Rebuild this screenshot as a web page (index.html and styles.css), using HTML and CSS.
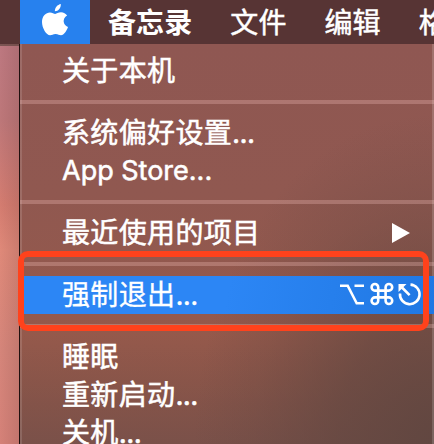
FILE: index.html
```
<!DOCTYPE html>
<html lang="zh-CN">
<head>
<meta charset="utf-8">
<title>Apple 菜单</title>
<link rel="stylesheet" href="styles.css">
</head>
<body>
<div class="desktop">
  <header class="menubar">
    <div class="apple">
      <svg width="26" height="32" viewBox="0 0 26 32" fill="#fff"><path d="M18.8 0C19.1 3.7 16.4 7.2 12.9 7.3C12.6 3.7 15.6.6 18.8 0Z"/><path d="M13.2 9.9C14.7 9.9 16.2 8.3 19 8.3C21.6 8.3 23.8 9.6 25.1 11.5C20 14.4 20.8 21 26 23C24.7 26.6 22 31.3 19 31.3C17 31.3 16.3 30 13.6 30C10.9 30 10 31.3 8.1 31.3C4.3 31.3 0 24.2 0 18.1C0 11.8 4 8.4 7.9 8.4C10.3 8.4 12 9.9 13.2 9.9Z"/></svg>
    </div>
    <nav class="titles"><b>备忘录</b><span>文件</span><span>编辑</span><span>格式</span></nav>
  </header>
  <main class="menu">
    <div class="item">关于本机</div>
    <div class="separator"></div>
    <div class="item">系统偏好设置<span class="dots">...</span></div>
    <div class="item latin">App Store...</div>
    <div class="separator"></div>
    <div class="item">最近使用的项目
      <svg class="arrow" width="18" height="20" viewBox="0 0 18 20"><path d="M0 0L18 10L0 20Z" fill="#fff"/></svg>
    </div>
    <div class="separator"></div>
    <div class="item selected">强制退出<span class="dots">...</span>
      <svg class="keys" width="84" height="28" viewBox="0 0 84 28" fill="none" stroke="#fff" stroke-width="2.6">
        <path d="M1 5.7H8.7L17.7 23.3H25M15.5 5.7H25"/>
        <path d="M39.2 10.6H35.9A3.3 3.3 0 1 1 39.2 7.3V20.7A3.3 3.3 0 1 1 35.9 17.4H49.9A3.3 3.3 0 1 1 46.6 20.7V7.3A3.3 3.3 0 1 1 49.9 10.6H39"/>
        <path d="M71.5 4.6A9.8 9.8 0 1 1 61 13.5M62.5 7L70.6 15.1"/>
        <path d="M59.5 4H67.5L59.5 12Z" fill="#fff" stroke="none"/>
      </svg>
    </div>
    <div class="separator"></div>
    <div class="item">睡眠</div>
    <div class="item">重新启动<span class="dots">...</span></div>
    <div class="item">关机<span class="dots">...</span></div>
  </main>
  <div class="highlight"></div>
</div>
</body>
</html>
```
FILE: styles.css
```
* { box-sizing: border-box; }
body { margin: 0; }
.desktop {
  position: relative;
  width: 434px;
  height: 444px;
  overflow: hidden;
  color: #fff;
  font: 28px/38px "Noto Sans CJK SC", sans-serif;
  background: linear-gradient(90deg, transparent, rgba(90, 50, 50, .15) 19px, transparent 20px),
    linear-gradient(#7c5553 46px, #bd7880 46px, #bd7779 120px, #d47c70 205px, #df8979 250px, #d5857a 350px, #d58178);
}
.menubar {
  display: flex;
  height: 44px;
  padding-left: 20px;
  background: #573434;
}
.apple {
  flex: none;
  width: 70px;
  padding: 4px 0 0 22px;
  background: #2781ee;
}
.apple svg { display: block; }
.titles {
  display: flex;
  gap: 38px;
  padding: 2px 0 0 18px;
  white-space: nowrap;
  letter-spacing: .1px;
  -webkit-text-stroke: .5px #fff;
}
.titles b { -webkit-text-stroke: 0; }
.menu {
  width: 415px;
  height: 400px;
  margin-left: 19px;
  padding-top: 8px;
  overflow: hidden;
  border-left: 1px solid #20100f;
  box-shadow: inset 2px 0 rgba(255, 255, 255, .13), inset -2px 0 rgba(255, 255, 255, .16);
  background: radial-gradient(ellipse 240px 330px at 100% 100%, rgba(96, 70, 64, .95), rgba(96, 70, 64, .65) 40%, rgba(96, 70, 64, .22) 75%, transparent),
    linear-gradient(rgba(118, 80, 74, 0) 290px, rgba(118, 80, 74, .85) 400px),
    linear-gradient(#8f5752, #905850 150px, #95594b 300px, #925646);
}
.item {
  display: flex;
  align-items: center;
  height: 38px;
  padding: 0 8px 4px 42px;
  white-space: nowrap;
  letter-spacing: .35px;
  -webkit-text-stroke: .55px #fff;
}
.latin, .dots { font-family: Inter, sans-serif; }
.latin { padding-bottom: 0; font-size: 27px; letter-spacing: 0; }
.dots { padding-top: 3px; font-size: 28px; letter-spacing: -.6px; }
.separator {
  height: 24px;
  padding-top: 10px;
}
.separator::before {
  content: "";
  display: block;
  height: 4px;
  background: rgba(255, 205, 200, .27);
}
.selected {
  background: linear-gradient(100deg, #2c86f5 50%, #2078e3);
  -webkit-text-stroke-width: .3px;
}
.arrow { position: relative; top: 2px; margin: 0 16px 0 auto; }
.keys { position: relative; top: 1px; margin: 0 3px 0 auto; }
.highlight {
  position: absolute;
  left: 18px;
  top: 251px;
  width: 411px;
  height: 80px;
  border: 6px solid #ff421c;
  border-radius: 10px;
}
```
